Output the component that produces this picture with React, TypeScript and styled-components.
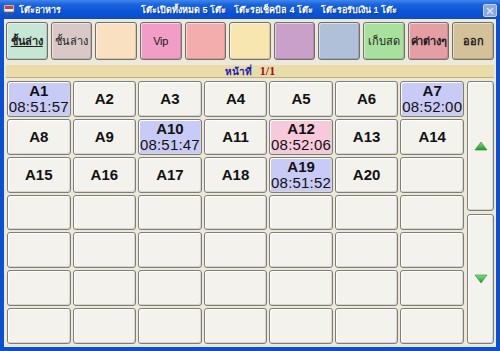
import React from 'react';
import styled, { createGlobalStyle } from 'styled-components';

const Global = createGlobalStyle`
    html, body {
        margin: 0;
        padding: 0;
        background: #ffffff;
    }
    * {
        box-sizing: border-box;
    }
`;

const Window = styled.div`
    width: 500px;
    height: 351px;
    display: flex;
    flex-direction: column;
    background: #0b4fd2;
    font-family: "Liberation Sans", "Noto Sans", sans-serif;
    overflow: hidden;
`;

const TitleBar = styled.div`
    height: 19px;
    flex-shrink: 0;
    display: flex;
    align-items: center;
    padding: 0 3px 0 3px;
    background: linear-gradient(#3d86ee 0%, #1a62dc 25%, #0b55d6 60%, #0a4ccb 100%);
    color: #ffffff;
    font-size: 9px;
    font-weight: bold;
    white-space: nowrap;
`;

const TitleText = styled.span<{ $left?: number }>`
    margin-left: ${(props) => props.$left ?? 0}px;
    text-shadow: 1px 1px 0 #0a3a9a;
`;

const CloseBox = styled.div`
    margin-left: auto;
    width: 14px;
    height: 13px;
    margin-top: 2px;
    border-radius: 2px;
    background: #8ea6dc;
    border: 1px solid #c5d3f2;
    display: flex;
    align-items: center;
    justify-content: center;
`;

const Body = styled.div`
    flex: 1;
    margin: 0 4px 4px 4px;
    background: #ece9d8;
    padding: 3px 2px 3px 2px;
    display: flex;
    flex-direction: column;
`;

const Toolbar = styled.div`
    display: grid;
    grid-template-columns: repeat(11, 1fr);
    column-gap: 3px;
    height: 38px;
`;

const ToolButton = styled.div<{ $bg: string; $bold?: boolean; $under?: boolean }>`
    background: ${(props) => props.$bg};
    border: 1px solid #707070;
    border-radius: 3px;
    box-shadow: inset 1px 1px 0 rgba(255, 255, 255, 0.5), inset -1px -1px 0 rgba(0, 0, 0, 0.12);
    display: flex;
    align-items: center;
    justify-content: center;
    font-size: 11px;
    white-space: nowrap;
    letter-spacing: -0.2px;
    color: #202020;
    font-weight: ${(props) => (props.$bold ? 'bold' : 'normal')};
    text-decoration: ${(props) => (props.$under ? 'underline' : 'none')};
`;

const PageBar = styled.div`
    margin-top: 5px;
    height: 13px;
    background: #e9dcab;
    border-bottom: 1px solid #bfb07a;
    display: flex;
    align-items: center;
    justify-content: center;
    font-family: "Liberation Serif", "Noto Sans", serif;
    font-weight: bold;
    font-size: 10px;
    gap: 8px;
`;

const PageWord = styled.span`
    color: #1a1ab8;
`;

const PageNum = styled.span`
    color: #a01010;
    font-size: 12px;
`;

const Main = styled.div`
    flex: 1;
    margin-top: 3px;
    padding-left: 1px;
    display: flex;
    gap: 3px;
`;

const TableGrid = styled.div`
    flex: 1;
    display: grid;
    grid-template-columns: repeat(7, 1fr);
    grid-template-rows: repeat(7, 1fr);
    gap: 2px 2px;
`;

const Cell = styled.div<{ $state?: 'busy' | 'bill' }>`
    background: ${(props) =>
        props.$state === 'busy' ? '#c9cbf7' : props.$state === 'bill' ? '#f7cadb' : '#f3f2ec'};
    border: 1px solid #7d7d7d;
    border-radius: 3px;
    box-shadow: inset 1px 1px 0 #ffffff, inset -1px -1px 0 #d8d6cc;
    display: flex;
    flex-direction: column;
    align-items: center;
    justify-content: center;
    color: #111111;
    line-height: 16px;
`;

const CellName = styled.div`
    font-weight: bold;
    font-size: 15px;
`;

const CellTime = styled.div`
    font-size: 15px;
    letter-spacing: 0.2px;
`;

const ScrollCol = styled.div`
    width: 27px;
    display: flex;
    flex-direction: column;
    gap: 3px;
`;

const ScrollButton = styled.div`
    flex: 1;
    background: #f3f2ec;
    border: 1px solid #7d7d7d;
    border-radius: 3px;
    box-shadow: inset 1px 1px 0 #ffffff, inset -1px -1px 0 #d8d6cc;
    display: flex;
    align-items: center;
    justify-content: center;
`;

const buttons = [
    { label: 'ชั้นล่าง', bg: '#c6e7d6', bold: true, under: true },
    { label: 'ชั้นล่าง', bg: '#d8c8c6' },
    { label: '', bg: '#f8e0c0' },
    { label: 'Vip', bg: '#f19dc6' },
    { label: '', bg: '#f2adac' },
    { label: '', bg: '#f8e6b0' },
    { label: '', bg: '#c8a0c9' },
    { label: '', bg: '#afc0d8' },
    { label: 'เก็บสด', bg: '#a8e19e' },
    { label: 'ค่าต่างๆ', bg: '#e49ea4', bold: true },
    { label: 'ออก', bg: '#d2c199', bold: true },
];

interface TableInfo {
    name: string;
    time?: string;
    state?: 'busy' | 'bill';
}

const tables: TableInfo[] = [
    { name: 'A1', time: '08:51:57', state: 'busy' },
    { name: 'A2' },
    { name: 'A3' },
    { name: 'A4' },
    { name: 'A5' },
    { name: 'A6' },
    { name: 'A7', time: '08:52:00', state: 'busy' },
    { name: 'A8' },
    { name: 'A9' },
    { name: 'A10', time: '08:51:47', state: 'busy' },
    { name: 'A11' },
    { name: 'A12', time: '08:52:06', state: 'bill' },
    { name: 'A13' },
    { name: 'A14' },
    { name: 'A15' },
    { name: 'A16' },
    { name: 'A17' },
    { name: 'A18' },
    { name: 'A19', time: '08:51:52', state: 'busy' },
    { name: 'A20' },
];

const cells: (TableInfo | null)[] = Array.from({ length: 49 }, (_, i) => tables[i] ?? null);

const Arrow: React.FC<{ down?: boolean }> = ({ down }) => (
    <svg width="14" height="10" viewBox="0 0 14 10">
        <defs>
            <linearGradient id={down ? 'gd' : 'gu'} x1="0" y1="0" x2="0" y2="1">
                <stop offset="0" stopColor="#7fe07f" />
                <stop offset="1" stopColor="#1f9a2a" />
            </linearGradient>
        </defs>
        <polygon
            points={down ? '1,1 13,1 7,9' : '7,1 13,9 1,9'}
            fill={`url(#${down ? 'gd' : 'gu'})`}
            stroke="#2a8a30"
            strokeWidth="0.6"
        />
    </svg>
);

const App: React.FC = () => {
    return (
        <Window>
            <Global />
            <TitleBar>
                <svg width="12" height="12" viewBox="0 0 12 12">
                    <rect x="1" y="1" width="10" height="7" fill="#f4f4f4" stroke="#6a6a6a" strokeWidth="0.8" />
                    <rect x="2" y="2" width="8" height="3" fill="#c84040" />
                    <rect x="3" y="8" width="1.5" height="3" fill="#5a5a5a" />
                    <rect x="7.5" y="8" width="1.5" height="3" fill="#5a5a5a" />
                </svg>
                <TitleText $left={4}>โต๊ะอาหาร</TitleText>
                <TitleText $left={80}>โต๊ะเปิดทั้งหมด 5 โต๊ะ</TitleText>
                <TitleText $left={8}>โต๊ะรอเช็คบิล 4 โต๊ะ</TitleText>
                <TitleText $left={8}>โต๊ะรอรับเงิน 1 โต๊ะ</TitleText>
                <CloseBox>
                    <svg width="8" height="8" viewBox="0 0 8 8">
                        <path d="M1 1 L7 7 M7 1 L1 7" stroke="#d8e2f8" strokeWidth="1.6" />
                    </svg>
                </CloseBox>
            </TitleBar>
            <Body>
                <Toolbar>
                    {buttons.map((b, i) => (
                        <ToolButton key={i} $bg={b.bg} $bold={b.bold} $under={b.under}>
                            {b.label}
                        </ToolButton>
                    ))}
                </Toolbar>
                <PageBar>
                    <PageWord>หน้าที่</PageWord>
                    <PageNum>1/1</PageNum>
                </PageBar>
                <Main>
                    <TableGrid>
                        {cells.map((c, i) => (
                            <Cell key={i} $state={c?.state}>
                                {c && <CellName>{c.name}</CellName>}
                                {c?.time && <CellTime>{c.time}</CellTime>}
                            </Cell>
                        ))}
                    </TableGrid>
                    <ScrollCol>
                        <ScrollButton>
                            <Arrow />
                        </ScrollButton>
                        <ScrollButton>
                            <Arrow down />
                        </ScrollButton>
                    </ScrollCol>
                </Main>
            </Body>
        </Window>
    );
};

export default App;
